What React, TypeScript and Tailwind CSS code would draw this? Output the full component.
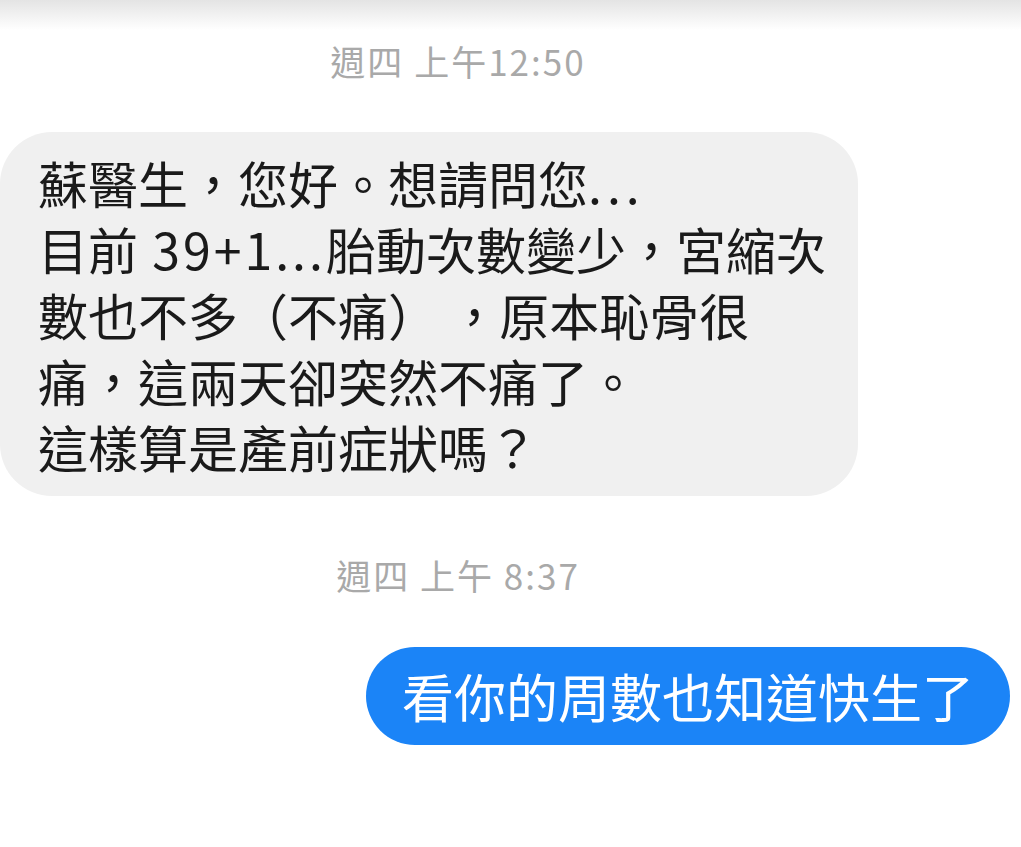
const font = { fontFamily: '"Noto Sans CJK TC", "Noto Sans", sans-serif' };

function Stamp({ children }: { children: React.ReactNode }) {
  return (
    <div className="w-[916px] text-center text-[35px] leading-[40px] tracking-[2px] text-[#a9a9a9]">
      {children}
    </div>
  );
}

export default function App() {
  return (
    <div className="w-[1021px] h-[847px] bg-white overflow-hidden flex flex-col [text-spacing-trim:space-all]" style={font}>
      <div className="h-[30px] shrink-0 bg-gradient-to-b from-[#e4e4e4] to-white" />

      <div className="mt-[11px]">
        <Stamp>週四 上午12:50</Stamp>
      </div>

      {/* incoming message */}
      <div className="mt-[51px] self-start w-[858px] rounded-[52px] bg-[#f0f0f0] pl-[38px] pr-[30px] py-[17px] text-[50px] leading-[66px] text-[#1a1a1a] whitespace-nowrap">
        <div>蘇醫生，您好。想請問您<span className="tracking-[5px]">...</span></div>
        <div>目前<span className="tracking-[3px]"> 39+1...</span>胎動次數變少，宮縮次</div>
        <div>數也不多（不痛） ，原本恥骨很</div>
        <div>痛，這兩天卻突然不痛了。</div>
        <div>這樣算是產前症狀嗎？</div>
      </div>

      <div className="mt-[59px]">
        <Stamp>週四 上午 8:37</Stamp>
      </div>

      {/* reply */}
      <div className="mt-[52px] self-end mr-[11px] rounded-full bg-[#1b84f7] px-9 py-4 text-[52px] leading-[66px] text-white whitespace-nowrap">
        看你的周數也知道快生了
      </div>
    </div>
  );
}
